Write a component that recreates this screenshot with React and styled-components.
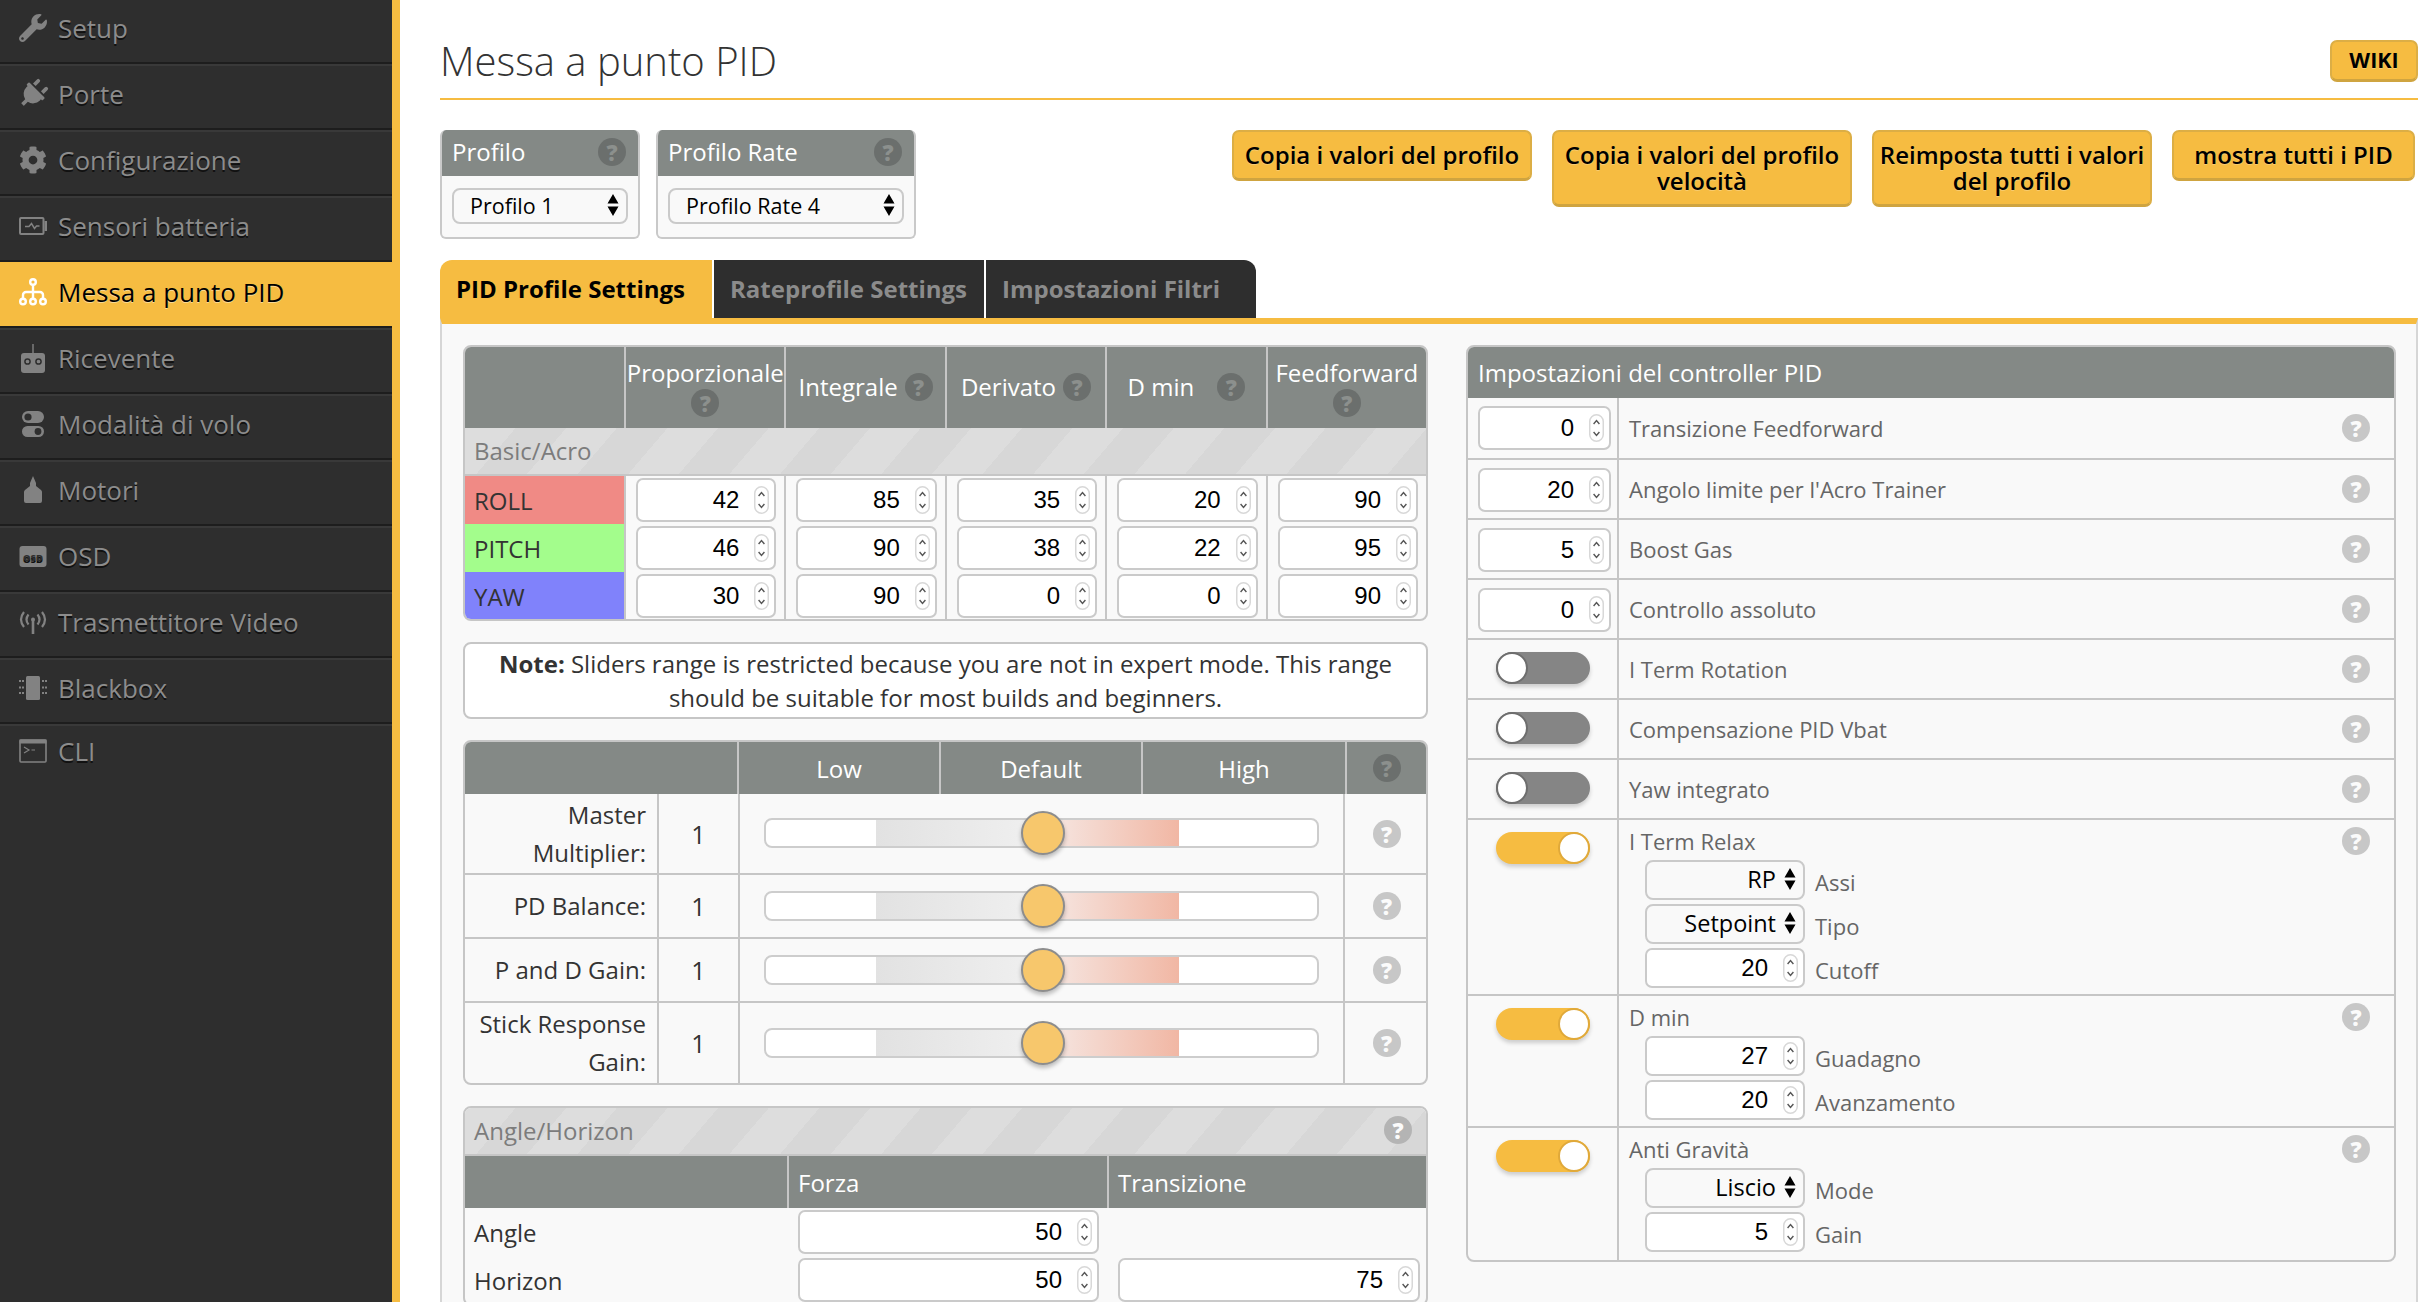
import React from 'react';
import styled, { createGlobalStyle } from 'styled-components';
import { FaWrench, FaPlug, FaCog } from 'react-icons/fa';

const YELLOW = '#f6bc41';
const HEAD = '#848986';
const LINE = '#c6c6c6';

const GlobalStyle = createGlobalStyle`
  html, body { margin: 0; padding: 0; background: #fff; }
  body { font-family: "Open Sans", "Liberation Sans", sans-serif; color: #333; }
  * { box-sizing: border-box; }
`;

const Page = styled.div`
  display: flex;
  width: 2428px;
  height: 1302px;
  overflow: hidden;
`;

const Sidebar = styled.nav`
  flex: 0 0 400px;
  height: 100%;
  background: #2e2e2e;
  border-right: 8px solid ${YELLOW};
  overflow: hidden;
`;

const NavList = styled.ul`
  list-style: none;
  margin: -2px 0 0;
  padding: 0;
`;

const NavItem = styled.li`
  display: flex;
  align-items: center;
  gap: 11px;
  height: ${p => (p.$last ? 58 : 66)}px;
  padding: 0 0 6px 19px;
  font-size: 26px;
  color: ${p => (p.$active ? '#000' : '#8c8c8c')};
  text-shadow: ${p => (p.$active ? '0 1px 0 rgba(255,255,255,.45)' : '0 2px 0 #111')};
  background: ${p => (p.$active ? YELLOW : 'transparent')};
  border-top: 2px solid ${p => (p.$active ? YELLOW : '#393939')};
  border-bottom: ${p => (p.$last ? 'none' : '2px solid #1d1d1d')};
`;

const NavIcon = styled.span`
  display: flex;
  flex: 0 0 28px;
  width: 28px;
  height: 28px;
  align-items: center;
  justify-content: center;
  color: ${p => (p.$active ? '#fff' : '#828282')};
  svg { display: block; }
`;

const Main = styled.main`
  flex: 1;
  min-width: 0;
  height: 100%;
  overflow: hidden;
  padding: 0 10px 0 40px;
  display: flex;
  flex-direction: column;
`;

const TitleBar = styled.header`
  flex: 0 0 100px;
  display: flex;
  justify-content: space-between;
  align-items: flex-end;
  padding-bottom: 16px;
  border-bottom: 2px solid ${YELLOW};
`;

const Title = styled.h1`
  margin: 0 0 -6px;
  font-size: 40px;
  line-height: 54px;
  font-weight: 300;
  color: #333;
`;

const Button = styled.div`
  background: ${YELLOW};
  border: 2px solid #dcae45;
  border-bottom-color: #cfa440;
  border-bottom-width: 3px;
  border-radius: 7px;
  color: #000;
  font-weight: 600;
  font-size: 24px;
  line-height: 26px;
  text-align: center;
  text-shadow: 0 1px 0 rgba(255,255,255,.25);
  padding: 10px 2px;
  width: ${p => p.$w}px;
`;

const WikiButton = styled(Button)`
  font-size: 21.5px;
  font-weight: 700;
  height: 42px;
  width: 88px;
  line-height: 36px;
  padding: 0;
`;

const Toolbar = styled.section`
  display: flex;
  align-items: flex-start;
  margin-top: 30px;
  flex: 0 0 109px;
`;

const ProfileBox = styled.div`
  width: ${p => p.$w}px;
  height: 109px;
  margin-right: 16px;
  border: 2px solid #c9c9c9;
  border-top: none;
  border-radius: 6px;
  background: #f9f9f9;
  overflow: hidden;
`;

const ProfileHead = styled.div`
  display: flex;
  align-items: center;
  justify-content: space-between;
  height: 46px;
  margin: 0 -2px;
  padding: 0 14px 3px 12px;
  background: ${HEAD};
  color: #fff;
  font-size: 24px;
`;

const ProfileBody = styled.div`
  padding: 12px 10px 0;
`;

const Select = styled.div`
  display: flex;
  align-items: center;
  justify-content: ${p => (p.$right ? 'flex-end' : 'space-between')};
  gap: 8px;
  height: ${p => p.$h || 36}px;
  width: ${p => (p.$w ? `${p.$w}px` : '100%')};
  padding: 0 7px 2px 16px;
  border: 2px solid #cacaca;
  border-radius: 8px;
  background: #f9f9f9;
  color: #000;
  font-size: ${p => p.$size || 21.5}px;
`;

const ButtonGroup = styled.div`
  display: flex;
  align-items: flex-start;
  gap: 20px;
  margin-left: auto;
  padding-right: 3px;
`;

const Tabs = styled.div`
  display: flex;
  gap: 2px;
  margin-top: 21px;
  flex: 0 0 58px;
`;

const Tab = styled.div`
  width: ${p => p.$w}px;
  height: 58px;
  display: flex;
  align-items: center;
  padding: 0 0 1px 16px;
  font-size: 24px;
  font-weight: 700;
  color: ${p => (p.$active ? '#000' : '#8b8b8b')};
  background: ${p => (p.$active ? YELLOW : '#2e2e2e')};
  border-radius: ${p => p.$radius};
`;

const TabPanel = styled.div`
  flex: 1;
  display: flex;
  gap: 38px;
  align-items: flex-start;
  padding: 21px 20px 0 21px;
  background: #f9f9f9;
  border-top: 6px solid ${YELLOW};
  border-left: 2px solid #d6d6d6;
  border-right: 2px solid #d6d6d6;
`;

const LeftColumn = styled.div`
  flex: 0 0 965px;
  display: flex;
  flex-direction: column;
  gap: 21px;
`;

const Box = styled.div`
  border: 2px solid ${LINE};
  border-radius: 8px;
  overflow: hidden;
  background: #f9f9f9;
`;

const RightBox = styled(Box)`
  flex: 0 0 930px;
`;

const PidHeader = styled.div`
  display: grid;
  grid-template-columns: 159px repeat(5, 1fr);
  height: 81px;
  background: ${HEAD};
  color: #fff;
  font-size: 24px;
`;

const PidHeadCell = styled.div`
  display: flex;
  flex-wrap: wrap;
  align-items: center;
  align-content: center;
  justify-content: center;
  gap: 0 ${p => p.$gap || 7}px;
  line-height: 32px;
  padding-bottom: 2px;
  white-space: nowrap;
  border-left: ${p => (p.$first ? 'none' : `2px solid ${LINE}`)};
`;

const SubHeader = styled.div`
  display: flex;
  align-items: center;
  justify-content: space-between;
  height: ${p => p.$h}px;
  padding: 0 14px 2px 9px;
  font-size: 24px;
  color: #7c7c7c;
  border-bottom: 2px solid ${LINE};
  background: repeating-linear-gradient(130.5deg, #dddddd 0 38.5px, #d7d7d7 38.5px 77px);
`;

const PidRow = styled.div`
  display: grid;
  grid-template-columns: 159px repeat(5, 1fr);
  height: ${p => (p.$last ? 47 : 48)}px;
`;

const AxisCell = styled.div`
  display: flex;
  align-items: center;
  padding: 1px 0 0 9px;
  font-size: 24px;
  color: #333;
  background: ${p => p.$color};
`;

const PidCell = styled.div`
  display: flex;
  align-items: center;
  padding: 0 8px 0 10px;
  border-left: 2px solid ${LINE};
`;

const InputBox = styled.div`
  display: flex;
  align-items: center;
  justify-content: flex-end;
  gap: 15px;
  flex: ${p => (p.$w ? `0 0 ${p.$w}px` : 1)};
  height: ${p => p.$h || 44}px;
  padding-right: 5px;
  background: #fff;
  border: 2px solid #cacaca;
  border-radius: 7px;
  font-family: "Liberation Sans", Arial, sans-serif;
  font-size: 24px;
  color: #000;
`;

const Spin = styled.svg`
  display: block;
  flex: 0 0 15px;
`;

const NoteBox = styled.div`
  height: 77px;
  border: 2px solid ${LINE};
  border-radius: 8px;
  background: #fff;
  padding: 0 24px;
  text-align: center;
  font-size: 24px;
  line-height: 34px;
  color: #333;
  display: flex;
  align-items: center;
  b { font-weight: 700; }
`;

const SliderHeader = styled.div`
  display: grid;
  grid-template-columns: 272px 202px 202px 204px 1fr;
  height: 52px;
  background: ${HEAD};
  color: #fff;
  font-size: 24px;
`;

const SliderHeadCell = styled.div`
  display: flex;
  align-items: center;
  justify-content: center;
  border-left: ${p => (p.$first ? 'none' : `2px solid ${LINE}`)};
`;

const SliderRow = styled.div`
  display: grid;
  grid-template-columns: 192px 81px 607px 1fr;
  height: ${p => p.$h}px;
  border-bottom: ${p => (p.$last ? 'none' : `2px solid ${LINE}`)};
`;

const SliderLabel = styled.div`
  display: flex;
  align-items: center;
  justify-content: flex-end;
  text-align: right;
  padding: 0 11px 0 0;
  font-size: 24px;
  line-height: 38px;
  color: #333;
`;

const SliderValue = styled.div`
  display: flex;
  align-items: center;
  justify-content: center;
  font-size: 25px;
  color: #333;
  border-left: 2px solid ${LINE};
`;

const SliderCell = styled.div`
  display: flex;
  align-items: center;
  padding: 0 24px;
  border-left: 2px solid ${LINE};
  border-right: 2px solid ${LINE};
`;

const Track = styled.div`
  position: relative;
  width: 100%;
  height: 30px;
  margin-bottom: 1px;
  border: 2px solid #cdcdcd;
  border-radius: 8px;
  background: linear-gradient(to right,
    #fff 110px, #e2e2e2 110px, #f0f0f0 276px,
    #f6e9e5 276px, #f1b7a4 413px, #fff 413px);
`;

const Thumb = styled.div`
  position: absolute;
  left: 255px;
  top: -9px;
  width: 44px;
  height: 44px;
  border-radius: 50%;
  background: #f7c76c;
  border: 2px solid #8d8d8d;
  box-shadow: 0 3px 4px rgba(0,0,0,.25);
`;

const HelpCell = styled.div`
  display: flex;
  align-items: center;
  justify-content: center;
  padding-left: 2px;
`;

const Help = styled.span`
  display: inline-flex;
  flex: 0 0 28px;
  width: 28px;
  height: 28px;
  align-items: center;
  justify-content: center;
  border-radius: 50%;
  font-size: 22px;
  font-weight: 800;
  line-height: 1;
  background: ${p => (p.$dark ? '#6b6f6d' : p.$mid ? '#b4b4b4' : '#c7c7c7')};
  color: ${p => (p.$dark ? '#8c908d' : '#fbfbfb')};
`;

const AngleHeader = styled.div`
  display: grid;
  grid-template-columns: 322px 320px 1fr;
  height: 52px;
  background: ${HEAD};
  color: #fff;
  font-size: 24px;
`;

const AngleHeadCell = styled.div`
  display: flex;
  align-items: center;
  padding-left: 9px;
  border-left: ${p => (p.$first ? 'none' : `2px solid ${LINE}`)};
`;

const AngleRow = styled.div`
  display: grid;
  grid-template-columns: 322px 320px 1fr;
  height: 48px;
`;

const AngleLabel = styled.div`
  display: flex;
  align-items: center;
  padding-left: 9px;
  font-size: 24px;
  color: #333;
`;

const AngleCell = styled.div`
  display: flex;
  align-items: center;
  padding: ${p => p.$pad};
`;

const ControllerHead = styled.div`
  display: flex;
  align-items: center;
  height: 51px;
  padding: 0 0 1px 10px;
  background: ${HEAD};
  color: #fff;
  font-size: 24px;
`;

const ControllerRow = styled.div`
  display: flex;
  height: ${p => p.$h}px;
  border-bottom: ${p => (p.$last ? 'none' : `2px solid ${LINE}`)};
`;

const ControlCell = styled.div`
  flex: 0 0 151px;
  display: flex;
  justify-content: center;
  align-items: flex-start;
  padding: ${p => (p.$toggle ? '12px 0 0' : '8px 6px 0 10px')};
  border-right: 2px solid ${LINE};
`;

const Toggle = styled.div`
  position: relative;
  width: 94px;
  height: 32px;
  border-radius: 16px;
  background: ${p => (p.$on ? YELLOW : '#858585')};
  box-shadow: 0 3px 4px rgba(0,0,0,.18);
`;

const Knob = styled.div`
  position: absolute;
  top: 0;
  ${p => (p.$on ? 'right: 0;' : 'left: 0;')}
  width: 32px;
  height: 32px;
  border-radius: 50%;
  background: #fff;
  border: 2px solid ${p => (p.$on ? '#e0a93a' : '#6e6e6e')};
`;

const LabelCell = styled.div`
  flex: 1;
  display: flex;
  flex-direction: column;
  padding: 0 24px 0 10px;
  justify-content: ${p => (p.$expanded ? 'flex-start' : 'center')};
`;

const LabelLine = styled.div`
  display: flex;
  align-items: center;
  justify-content: space-between;
  min-height: ${p => (p.$expanded ? 42 : 0)}px;
  font-size: 22px;
  color: #666;
`;

const SubRows = styled.div`
  display: flex;
  flex-direction: column;
  gap: 4px;
  padding-left: 16px;
  margin-top: -2px;
`;

const SubRow = styled.div`
  display: flex;
  align-items: center;
  gap: 10px;
  height: 40px;
  font-size: 22px;
  color: #666;
`;

const SubLabel = styled.span`
  padding-top: 3px;
`;

const SelectArrows = () => (
  <svg width="12" height="24" viewBox="0 0 12 24" style={{ flex: '0 0 12px' }}>
    <path d="M6 1 L11.5 10.5 L.5 10.5Z M6 23 L.5 13.5 L11.5 13.5Z" fill="#000" />
  </svg>
);

const Spinner = () => (
  <Spin width="15" height="28" viewBox="0 0 15 28">
    <rect x=".75" y=".75" width="13.5" height="26.5" rx="6.75" fill="#fff" stroke="#d8d8d8" strokeWidth="1.5" />
    <path d="M4.6 10 L7.5 6.6 L10.4 10 M4.6 18 L7.5 21.4 L10.4 18" fill="none" stroke="#555" strokeWidth="1.4" />
  </Spin>
);

const NumberInput = ({ value, w, h }) => (
  <InputBox $w={w} $h={h}>{value}<Spinner /></InputBox>
);

const icons = {
  wrench: <FaWrench size={28} />,
  plug: <FaPlug size={30} style={{ transform: 'rotate(45deg)' }} />,
  cog: <FaCog size={30} />,
  battery: (
    <svg width="28" height="18" viewBox="0 0 28 18">
      <rect x="1" y="1" width="23.5" height="16" rx="1" fill="none" stroke="currentColor" strokeWidth="2" />
      <rect x="25.5" y="4" width="2.5" height="10" fill="currentColor" />
      <path d="M6 9.5h4l2.5-3 3 5 2-2.5h3" fill="none" stroke="currentColor" strokeWidth="1.5" />
    </svg>
  ),
  sitemap: (
    <svg width="28" height="28" viewBox="0 0 28 28" fill="none" stroke="currentColor" strokeWidth="2.4">
      <circle cx="14" cy="4" r="2.8" />
      <circle cx="4" cy="23.5" r="2.8" />
      <circle cx="14" cy="23.5" r="2.8" />
      <circle cx="24" cy="23.5" r="2.8" />
      <path d="M14 7v13.5M14 14H7a3 3 0 0 0-3 3v3.5M14 14h7a3 3 0 0 1 3 3v3.5" />
    </svg>
  ),
  remote: (
    <svg width="26" height="29" viewBox="0 0 26 29">
      <rect x="12.3" y="0" width="1.4" height="10" fill="currentColor" />
      <rect x="1" y="9" width="24" height="20" rx="3" fill="currentColor" />
      <circle cx="7.5" cy="17.5" r="2.6" fill="none" stroke="#2e2e2e" strokeWidth="1.5" />
      <circle cx="18.5" cy="17.5" r="2.6" fill="none" stroke="#2e2e2e" strokeWidth="1.5" />
    </svg>
  ),
  modes: (
    <svg width="24" height="28" viewBox="0 0 24 28">
      <rect x="1" y="1" width="22" height="12" rx="6" fill="currentColor" />
      <circle cx="7" cy="7" r="3.6" fill="#2e2e2e" />
      <rect x="1" y="16" width="22" height="11" rx="5.5" fill="currentColor" />
      <circle cx="17" cy="21.5" r="3.4" fill="#2e2e2e" />
    </svg>
  ),
  motor: (
    <svg width="20" height="28" viewBox="0 0 20 28">
      <path d="M10 0 L13 7 V10 L18 14 Q19 15 19 16 V25 Q19 27 17 27 H3 Q1 27 1 25 V16 Q1 15 2 14 L7 10 V7Z" fill="currentColor" />
    </svg>
  ),
  osd: (
    <svg width="28" height="21" viewBox="0 0 28 21">
      <rect x="0.5" y="0" width="27" height="21" rx="3" fill="currentColor" />
      <text x="14" y="14.5" textAnchor="middle" fontFamily="Open Sans, sans-serif" fontWeight="800" fontSize="9.5" fill="#2e2e2e">OSD</text>
    </svg>
  ),
  antenna: (
    <svg width="28" height="24" viewBox="0 0 28 24" fill="none" stroke="currentColor" strokeWidth="2.2">
      <path d="M5 2Q-1 9.5 5 17M9.5 4.5Q5.5 9.5 9.5 14.5M23 2Q29 9.5 23 17M18.5 4.5Q22.5 9.5 18.5 14.5" />
      <circle cx="14" cy="9.5" r="2" fill="currentColor" stroke="none" />
      <path d="M14 10v14" strokeWidth="2.6" />
    </svg>
  ),
  chip: (
    <svg width="28" height="24" viewBox="0 0 28 24">
      <rect x="7" y="0" width="14" height="24" rx="1.5" fill="currentColor" />
      <path d="M0 5h5M0 11.5h5M0 17h5M23 5h5M23 11.5h5M23 17h5" stroke="currentColor" strokeWidth="2" strokeDasharray="2 1" />
    </svg>
  ),
  cli: (
    <svg width="28" height="24" viewBox="0 0 28 24" fill="none" stroke="currentColor">
      <rect x="1" y="1" width="26" height="22" rx="1" strokeWidth="1.6" />
      <rect x="1" y="1" width="26" height="3" fill="currentColor" strokeWidth="1" />
      <path d="M5 8l5 3-5 3M12.5 11h3.5" strokeWidth="1.2" />
    </svg>
  ),
};

const navItems = [
  ['wrench', 'Setup'],
  ['plug', 'Porte'],
  ['cog', 'Configurazione'],
  ['battery', 'Sensori batteria'],
  ['sitemap', 'Messa a punto PID', true],
  ['remote', 'Ricevente'],
  ['modes', 'Modalità di volo'],
  ['motor', 'Motori'],
  ['osd', 'OSD'],
  ['antenna', 'Trasmettitore Video'],
  ['chip', 'Blackbox'],
  ['cli', 'CLI'],
];

const pidRows = [
  ['ROLL', '#f08a85', [42, 85, 35, 20, 90]],
  ['PITCH', '#a3fd8c', [46, 90, 38, 22, 95]],
  ['YAW', '#8082fb', [30, 90, 0, 0, 90], true],
];

const sliderRows = [
  ['Master Multiplier:', 81],
  ['PD Balance:', 64],
  ['P and D Gain:', 64],
  ['Stick Response Gain:', 80, true],
];

const simpleRows = [
  ['Transizione Feedforward', 0],
  ["Angolo limite per l'Acro Trainer", 20],
  ['Boost Gas', 5],
  ['Controllo assoluto', 0],
  ['I Term Rotation'],
  ['Compensazione PID Vbat'],
  ['Yaw integrato'],
];

const expandedRows = [
  ['I Term Relax', 176, [['select', 'RP', 'Assi'], ['select', 'Setpoint', 'Tipo'], ['input', 20, 'Cutoff']]],
  ['D min', 132, [['input', 27, 'Guadagno'], ['input', 20, 'Avanzamento']]],
  ['Anti Gravità', 132, [['select', 'Liscio', 'Mode'], ['input', 5, 'Gain']], true],
];

export default function App() {
  return (
    <Page>
      <GlobalStyle />
      <Sidebar>
        <NavList>
          {navItems.map(([icon, label, active], i) => (
            <NavItem key={label} $active={active} $last={i === navItems.length - 1}>
              <NavIcon $active={active}>{icons[icon]}</NavIcon>
              {label}
            </NavItem>
          ))}
        </NavList>
      </Sidebar>

      <Main>
        <TitleBar>
          <Title>Messa a punto PID</Title>
          <WikiButton>WIKI</WikiButton>
        </TitleBar>

        <Toolbar>
          <ProfileBox $w={200}>
            <ProfileHead>Profilo <Help $dark>?</Help></ProfileHead>
            <ProfileBody><Select>Profilo 1 <SelectArrows /></Select></ProfileBody>
          </ProfileBox>
          <ProfileBox $w={260}>
            <ProfileHead>Profilo Rate <Help $dark>?</Help></ProfileHead>
            <ProfileBody><Select>Profilo Rate 4 <SelectArrows /></Select></ProfileBody>
          </ProfileBox>
          <ButtonGroup>
            <Button $w={300}>Copia i valori del profilo</Button>
            <Button $w={300}>Copia i valori del profilo velocità</Button>
            <Button $w={280}>Reimposta tutti i valori del profilo</Button>
            <Button $w={243}>mostra tutti i PID</Button>
          </ButtonGroup>
        </Toolbar>

        <Tabs>
          <Tab $active $w={272} $radius="12px 0 0 0">PID Profile Settings</Tab>
          <Tab $w={270} $radius="0">Rateprofile Settings</Tab>
          <Tab $w={270} $radius="0 12px 0 0">Impostazioni Filtri</Tab>
        </Tabs>

        <TabPanel>
          <LeftColumn>
            <Box>
              <PidHeader>
                <PidHeadCell $first />
                <PidHeadCell>Proporzionale <Help $dark>?</Help></PidHeadCell>
                <PidHeadCell>Integrale <Help $dark>?</Help></PidHeadCell>
                <PidHeadCell>Derivato <Help $dark>?</Help></PidHeadCell>
                <PidHeadCell $gap={23}>D min <Help $dark>?</Help></PidHeadCell>
                <PidHeadCell>Feedforward <Help $dark>?</Help></PidHeadCell>
              </PidHeader>
              <SubHeader $h={48}>Basic/Acro</SubHeader>
              {pidRows.map(([name, color, values, last]) => (
                <PidRow key={name} $last={last}>
                  <AxisCell $color={color}>{name}</AxisCell>
                  {values.map((v, i) => (
                    <PidCell key={i}><NumberInput value={v} /></PidCell>
                  ))}
                </PidRow>
              ))}
            </Box>

            <NoteBox>
              <div><b>Note:</b> Sliders range is restricted because you are not in expert mode. This range should be suitable for most builds and beginners.</div>
            </NoteBox>

            <Box>
              <SliderHeader>
                <SliderHeadCell $first />
                <SliderHeadCell>Low</SliderHeadCell>
                <SliderHeadCell>Default</SliderHeadCell>
                <SliderHeadCell>High</SliderHeadCell>
                <SliderHeadCell><Help $dark>?</Help></SliderHeadCell>
              </SliderHeader>
              {sliderRows.map(([label, h, last]) => (
                <SliderRow key={label} $h={h} $last={last}>
                  <SliderLabel>{label}</SliderLabel>
                  <SliderValue>1</SliderValue>
                  <SliderCell><Track><Thumb /></Track></SliderCell>
                  <HelpCell><Help>?</Help></HelpCell>
                </SliderRow>
              ))}
            </Box>

            <Box>
              <SubHeader $h={48}>Angle/Horizon <Help $mid>?</Help></SubHeader>
              <AngleHeader>
                <AngleHeadCell $first />
                <AngleHeadCell>Forza</AngleHeadCell>
                <AngleHeadCell>Transizione</AngleHeadCell>
              </AngleHeader>
              <AngleRow>
                <AngleLabel>Angle</AngleLabel>
                <AngleCell $pad="0 8px 0 11px"><NumberInput value={50} /></AngleCell>
                <AngleCell />
              </AngleRow>
              <AngleRow>
                <AngleLabel>Horizon</AngleLabel>
                <AngleCell $pad="0 8px 0 11px"><NumberInput value={50} /></AngleCell>
                <AngleCell $pad="0 6px 0 11px"><NumberInput value={75} /></AngleCell>
              </AngleRow>
            </Box>
          </LeftColumn>

          <RightBox>
            <ControllerHead>Impostazioni del controller PID</ControllerHead>
            {simpleRows.map(([label, value], i) => (
              <ControllerRow key={label} $h={i === 0 ? 62 : 60}>
                <ControlCell $toggle={value === undefined}>
                  {value === undefined
                    ? <Toggle><Knob /></Toggle>
                    : <NumberInput value={value} />}
                </ControlCell>
                <LabelCell>
                  <LabelLine>{label} <Help>?</Help></LabelLine>
                </LabelCell>
              </ControllerRow>
            ))}
            {expandedRows.map(([label, h, subs, last]) => (
              <ControllerRow key={label} $h={h} $last={last}>
                <ControlCell $toggle><Toggle $on><Knob $on /></Toggle></ControlCell>
                <LabelCell $expanded>
                  <LabelLine $expanded>{label} <Help>?</Help></LabelLine>
                  <SubRows>
                    {subs.map(([kind, value, name]) => (
                      <SubRow key={name}>
                        {kind === 'select'
                          ? <Select $right $w={160} $h={40} $size={23.5}>{value} <SelectArrows /></Select>
                          : <NumberInput value={value} w={160} h={40} />}
                        <SubLabel>{name}</SubLabel>
                      </SubRow>
                    ))}
                  </SubRows>
                </LabelCell>
              </ControllerRow>
            ))}
          </RightBox>
        </TabPanel>
      </Main>
    </Page>
  );
}
